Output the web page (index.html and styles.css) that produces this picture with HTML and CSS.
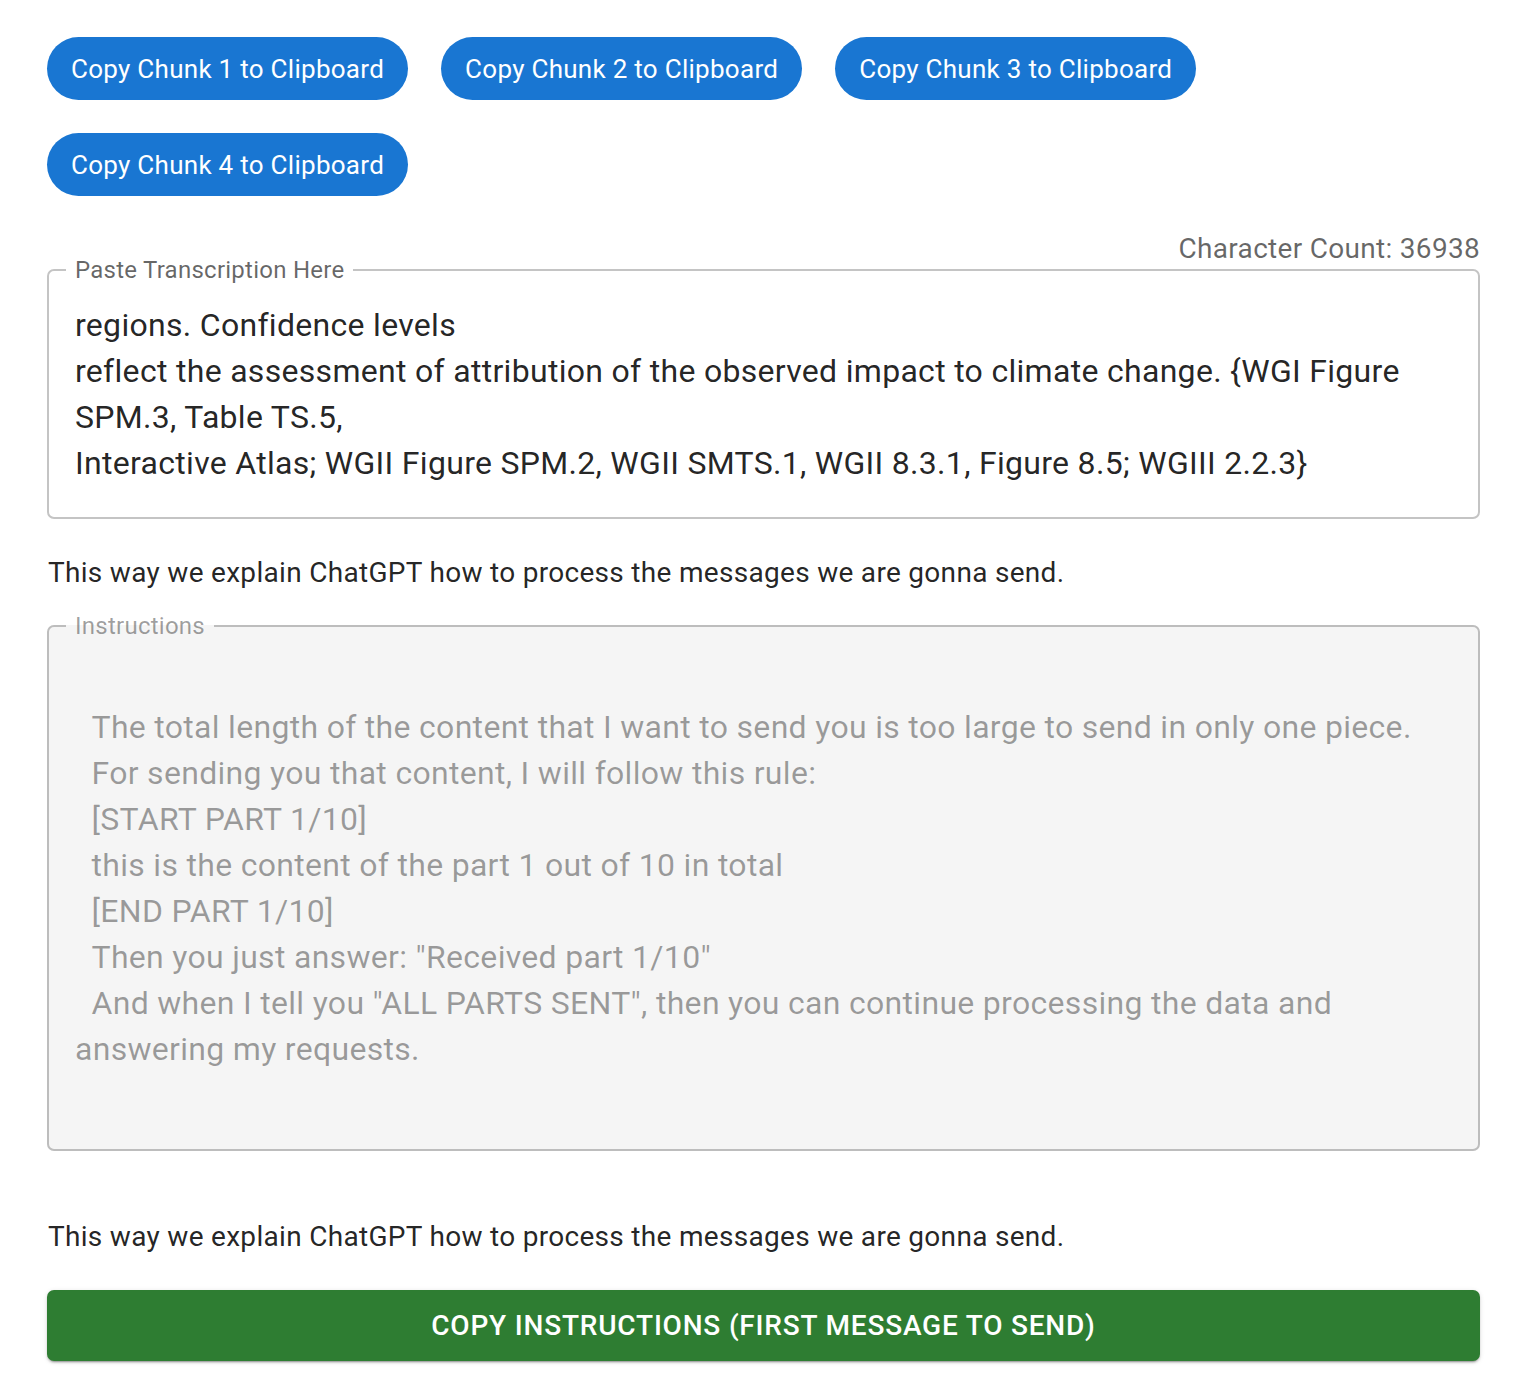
FILE: index.html
```html
<!DOCTYPE html>
<html>
<head>
<meta charset="utf-8">
<link rel="stylesheet" href="styles.css">
</head>
<body>
<div class="page">
  <div class="chunk-buttons">
    <button class="chunk-btn">Copy Chunk 1 to Clipboard</button>
    <button class="chunk-btn">Copy Chunk 2 to Clipboard</button>
    <button class="chunk-btn">Copy Chunk 3 to Clipboard</button>
    <button class="chunk-btn">Copy Chunk 4 to Clipboard</button>
  </div>
  <div class="char-count">Character Count: 36938</div>
  <fieldset class="field">
    <legend class="field-label">Paste Transcription Here</legend>
    <div class="field-text">regions. Confidence levels
reflect the assessment of attribution of the observed impact to climate change. {WGI Figure SPM.3, Table TS.5,
Interactive Atlas; WGII Figure SPM.2, WGII SMTS.1, WGII 8.3.1, Figure 8.5; WGIII 2.2.3}</div>
  </fieldset>
  <p class="note">This way we explain ChatGPT how to process the messages we are gonna send.</p>
  <fieldset class="field field-disabled">
    <legend class="field-label">Instructions</legend>
    <div class="field-text instr-text">  The total length of the content that I want to send you is too large to send in only one piece.
  For sending you that content, I will follow this rule:
  [START PART 1/10]
  this is the content of the part 1 out of 10 in total
  [END PART 1/10]
  Then you just answer: "Received part 1/10"
  And when I tell you "ALL PARTS SENT", then you can continue processing the data and answering my requests.</div>
  </fieldset>
  <p class="note note-second">This way we explain ChatGPT how to process the messages we are gonna send.</p>
  <button class="copy-instr">Copy Instructions (first message to send)</button>
</div>
</body>
</html>
```
FILE: styles.css
```css
html, body {
  margin: 0;
  padding: 0;
  background: #fff;
}
body {
  font-family: Roboto, "Liberation Sans", Arial, sans-serif;
  color: rgba(0, 0, 0, 0.87);
}
.page {
  padding: 37px 40px 26px 47px;
}
.chunk-buttons {
  display: flex;
  flex-wrap: wrap;
  gap: 33px 33px;
}
.chunk-btn {
  height: 63px;
  border: none;
  border-radius: 32px;
  background: #1976d2;
  color: #fff;
  font-family: Roboto, "Liberation Sans", Arial, sans-serif;
  font-size: 26px;
  font-weight: 400;
  letter-spacing: 0.28px;
  padding: 0 24px;
}
.char-count {
  text-align: right;
  font-size: 28px;
  line-height: 32px;
  letter-spacing: 0.3px;
  color: rgba(0, 0, 0, 0.6);
  margin-top: 37px;
  margin-bottom: -9px;
}
.field {
  margin: 0;
  border: 2px solid #c4c4c4;
  border-radius: 7px;
  padding: 18px 26px 31px 26px;
  min-width: 0;
}
.field-label {
  font-size: 24px;
  line-height: 28px;
  letter-spacing: 0.25px;
  color: rgba(0, 0, 0, 0.6);
  padding: 0 9px;
  margin-left: -9px;
}
.field-text {
  white-space: pre-wrap;
  font-size: 32px;
  line-height: 46px;
  letter-spacing: 0.3px;
  color: rgba(0, 0, 0, 0.87);
}
.note {
  margin: 0;
  font-size: 28px;
  line-height: 40px;
  letter-spacing: 0.3px;
  padding: 34px 0 19px 1px;
}
.field-disabled {
  background: #f5f5f5;
  border-color: #bdbdbd;
  padding-top: 64px;
  padding-bottom: 77px;
}
.field-disabled .field-label {
  color: rgba(0, 0, 0, 0.38);
}
.instr-text {
  color: rgba(0, 0, 0, 0.38);
}
.note-second {
  padding-top: 66px;
  padding-bottom: 33px;
}
.copy-instr {
  display: block;
  width: 100%;
  height: 71px;
  border: none;
  border-radius: 7px;
  background: #2e7d32;
  color: #fff;
  font-family: Roboto, "Liberation Sans", Arial, sans-serif;
  font-size: 28px;
  font-weight: 500;
  letter-spacing: 0.8px;
  text-transform: uppercase;
  box-shadow: 0 3px 1px -2px rgba(0,0,0,0.2), 0 2px 2px 0 rgba(0,0,0,0.14), 0 1px 5px 0 rgba(0,0,0,0.12);
}
```
